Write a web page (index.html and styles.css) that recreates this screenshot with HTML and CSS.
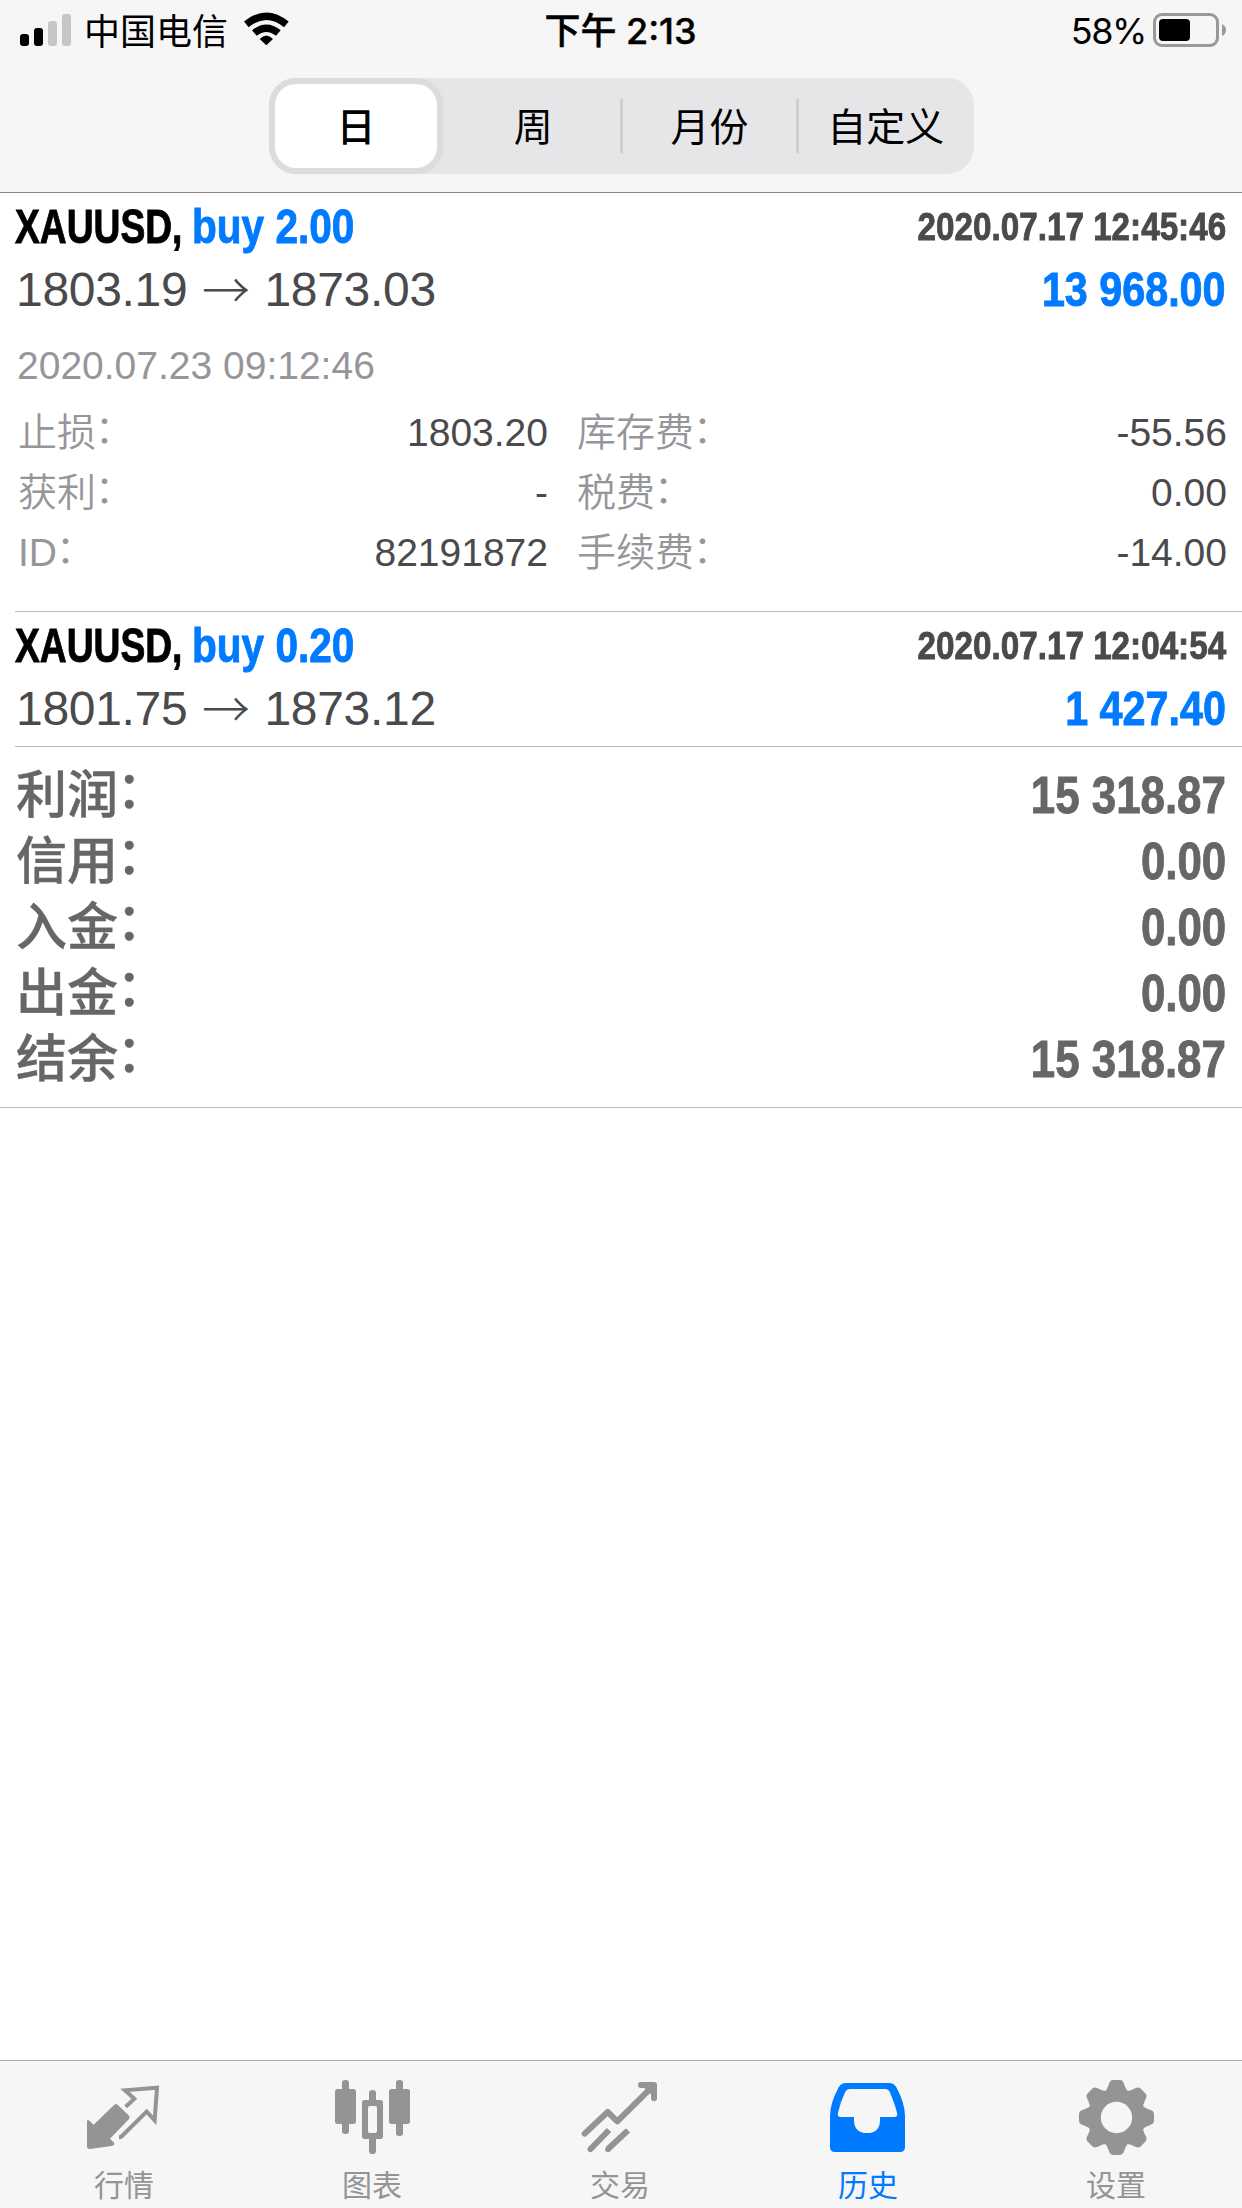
FILE: index.html
```html
<!DOCTYPE html>
<html lang="zh-CN">
<head>
<meta charset="utf-8">
<title>历史</title>
<link rel="stylesheet" href="styles.css">
</head>
<body>
<div class="app">
  <header class="top">
    <div class="status">
      <div class="status-side">
        <svg class="signal" viewBox="0 0 54 36" width="54" height="36">
          <rect x="0" y="22" width="9" height="12" rx="3"/>
          <rect x="14" y="16" width="9" height="18" rx="3"/>
          <rect class="off" x="28" y="9" width="9" height="25" rx="3"/>
          <rect class="off" x="42" y="2" width="9" height="32" rx="3"/>
        </svg>
        <span class="carrier">中国电信</span>
        <svg class="wifi" viewBox="728 34 140 108" width="46.7" height="36">
          <path d="M738 74 Q798 25 858 74" fill="none" stroke="#000" stroke-width="22"/>
          <path d="M762 100 Q798 71 834 100" fill="none" stroke="#000" stroke-width="22"/>
          <path d="M778 118 Q798 97 818 118 L798 137 Z"/>
        </svg>
      </div>
      <div class="clock">下午 2:13</div>
      <div class="status-side end">
        <span class="percent">58%</span>
        <svg class="battery" viewBox="0 0 74 36" width="74" height="36">
          <rect x="1.5" y="1.5" width="63" height="31" rx="7.5" fill="none" stroke="#999" stroke-width="3"/>
          <rect x="6" y="6" width="31" height="22" rx="4"/>
          <path d="M69 11 Q73 13 73 17 Q73 21 69 23 Z" fill="#999"/>
        </svg>
      </div>
    </div>
    <nav class="segments">
      <span class="segment active">日</span>
      <span class="segment">周</span>
      <span class="segment ruled">月份</span>
      <span class="segment ruled">自定义</span>
    </nav>
  </header>

  <main class="history">
    <article class="deal">
      <div class="line">
        <div class="title"><span class="symbol"><b>XAUUSD,</b></span><span class="side"><b>buy 2.00</b></span></div>
        <b class="closed">2020.07.17 12:45:46</b>
      </div>
      <div class="line prices">
        <div class="route">1803.19<span class="arrow">→</span>1873.03</div>
        <b class="profit">13 968.00</b>
      </div>
      <div class="details">
        <div class="opened">2020.07.23 09:12:46</div>
        <dl class="grid">
          <div class="pair"><dt>止损<i>：</i></dt><dd>1803.20</dd></div>
          <div class="pair"><dt>库存费<i>：</i></dt><dd>-55.56</dd></div>
          <div class="pair"><dt>获利<i>：</i></dt><dd>-</dd></div>
          <div class="pair"><dt>税费<i>：</i></dt><dd>0.00</dd></div>
          <div class="pair"><dt>ID<i>：</i></dt><dd>82191872</dd></div>
          <div class="pair"><dt>手续费<i>：</i></dt><dd>-14.00</dd></div>
        </dl>
      </div>
    </article>
    <article class="deal">
      <div class="line">
        <div class="title"><span class="symbol"><b>XAUUSD,</b></span><span class="side"><b>buy 0.20</b></span></div>
        <b class="closed">2020.07.17 12:04:54</b>
      </div>
      <div class="line prices">
        <div class="route">1801.75<span class="arrow">→</span>1873.12</div>
        <b class="profit">1 427.40</b>
      </div>
    </article>
    <section class="summary">
      <div class="total"><span>利润<i>：</i></span><b>15 318.87</b></div>
      <div class="total"><span>信用<i>：</i></span><b>0.00</b></div>
      <div class="total"><span>入金<i>：</i></span><b>0.00</b></div>
      <div class="total"><span>出金<i>：</i></span><b>0.00</b></div>
      <div class="total"><span>结余<i>：</i></span><b>15 318.87</b></div>
    </section>
  </main>

  <nav class="tabs">
    <a class="tab">
      <svg viewBox="246 75 252 237" width="84" height="79">
        <path d="M261 212 Q264 208 268 212 L281 224 L343 164 Q348 160 353 164 L387 197 Q391 202 387 207 L330 266 L343 279 Q344 284 339 287 L270 297 Q261 297 261 289 Z"/>
        <path d="M377 170 L403 146 L375 121 L471 113 L464 211 L440 185 L366 258 Q362 262 357 262" fill="none" stroke="currentColor" stroke-width="12"/>
      </svg>
      <span>行情</span>
    </a>
    <a class="tab">
      <svg viewBox="990 75 252 237" width="84" height="79">
        <rect x="1026" y="90" width="21" height="162" rx="9"/>
        <rect x="1005" y="117" width="63" height="105" rx="8"/>
        <rect x="1188" y="90" width="21" height="168" rx="9"/>
        <rect x="1167" y="117" width="63" height="105" rx="8"/>
        <path d="M1107 150 V129 Q1107 120 1117.500 120 Q1128 120 1128 129 V150 H1141 Q1149 150 1149 158 V259 Q1149 267 1141 267 H1128 V302 Q1128 312 1117.500 312 Q1107 312 1107 302 V267 H1094 Q1086 267 1086 259 V158 Q1086 150 1094 150 Z M1109 168 Q1104 168 1104 173 V244 Q1104 249 1109 249 H1126 Q1131 249 1131 244 V173 Q1131 168 1126 168 Z" fill-rule="evenodd"/>
      </svg>
      <span>图表</span>
    </a>
    <a class="tab">
      <svg viewBox="474 75 252 237" width="84" height="79">
        <g fill="none" stroke="currentColor" stroke-width="18" stroke-linejoin="round">
          <path d="M494 251 L563 186 L592 214 L700 107" stroke-linecap="round"/>
          <path d="M663 105 H702 V145" stroke-width="18" stroke-linecap="round"/>
          <path d="M512 297 L567 240 M564 297 L624 241"/>
        </g>
        <path d="M680 100 H706 V126 L690 132 L674 116 Z"/>
        <circle cx="511" cy="298" r="8.500"/><circle cx="564" cy="298" r="8.500"/>
      </svg>
      <span>交易</span>
    </a>
    <a class="tab current">
      <svg viewBox="78 75 252 237" width="84" height="79">
        <path d="M138 99 H267 Q282 99 289 112 Q315 160 315 198 V291 Q315 306 300 306 H105 Q90 306 90 291 V198 Q90 160 116 112 Q123 99 138 99 Z M149 117 Q140 117 136 125 Q122 153 114 188 Q111 201 122 201 H162 V209 Q162 249 201.500 249 Q240 249 240 209 V201 H283 Q294 201 291 188 Q284 160 269 125 Q265 117 257 117 Z" fill-rule="evenodd"/>
      </svg>
      <span>历史</span>
    </a>
    <a class="tab">
      <svg viewBox="822 75 252 237" width="84" height="79">
        <defs>
          <mask id="hub" maskUnits="userSpaceOnUse" x="822" y="75" width="252" height="252">
            <rect x="822" y="75" width="252" height="252" fill="#fff"/>
            <circle cx="949.500" cy="202.500" r="47" fill="#000"/>
          </mask>
          <path id="tooth" d="M910 128 Q921 121 925 107 Q929 90 939 90 H960 Q970 90 974 107 Q978 121 989 128 L949 202 Z"/>
        </defs>
        <g mask="url(#hub)">
          <circle cx="949.500" cy="202.500" r="86"/>
          <use href="#tooth"/>
          <use href="#tooth" transform="rotate(45 949.500 202.500)"/>
          <use href="#tooth" transform="rotate(90 949.500 202.500)"/>
          <use href="#tooth" transform="rotate(135 949.500 202.500)"/>
          <use href="#tooth" transform="rotate(180 949.500 202.500)"/>
          <use href="#tooth" transform="rotate(225 949.500 202.500)"/>
          <use href="#tooth" transform="rotate(270 949.500 202.500)"/>
          <use href="#tooth" transform="rotate(315 949.500 202.500)"/>
        </g>
      </svg>
      <span>设置</span>
    </a>
  </nav>
</div>
</body>
</html>
```
FILE: styles.css
```css
* { box-sizing: border-box; }

body {
  margin: 0;
  background: #fff;
  color: #000;
  font-family: "Liberation Sans", "Noto Sans CJK SC", sans-serif;
}

.app {
  display: flex;
  flex-direction: column;
  width: 1242px;
  height: 2208px;
  overflow: hidden;
}

/* status bar and period switch */
.top {
  height: 193px;
  background: #f6f6f6;
  border-bottom: 1px solid #8a8a8a;
}

.status {
  display: grid;
  grid-template-columns: 1fr auto 1fr;
  height: 60px;
  padding: 0 15px 0 20px;
  font: 400 36px/62px "Inter", "Noto Sans CJK SC", sans-serif;
}

.status-side { display: flex; }
.status-side.end { justify-content: flex-end; }
.signal { margin-top: 12px; }
.signal .off { fill: #c6c6c6; }
.carrier { width: 144px; margin-left: 10px; line-height: 64px; }
.wifi { margin: 11px 0 0 15px; }
.clock { margin-right: 6px; font-weight: 500; -webkit-text-stroke: 0.4px #000; }
.battery { margin: 13px 0 0 7px; }
.percent { letter-spacing: -1.4px; }

.segments {
  display: grid;
  grid-template-columns: repeat(4, 1fr);
  grid-template-rows: 96px;
  width: 705px;
  height: 96px;
  margin: 18px 0 0 269px;
  border-radius: 27px;
  background: #e6e6e8;
}

.segment {
  font-size: 39px;
  line-height: 100px;
  text-align: center;
}

.segment.active {
  margin: 6px 8px 6px 6px;
  border-radius: 21px;
  background: #fff;
  box-shadow: 0 0 0 6px #dcdcdd, 2px 0 10px rgba(0, 0, 0, 0.08);
  font-weight: 500;
  line-height: 88px;
}

.segment.ruled {
  margin-left: -2px;
  padding-left: 2px;
  background: linear-gradient(#cfcfd2, #cfcfd2) left 21px / 3px 54px no-repeat;
}

/* deals */
.history { flex: 1; }

/* full-width colons sit a little above their default height */
.history i {
  margin-left: -0.03em;
  font-style: normal;
  line-height: 0;
  vertical-align: 0.09em;
}

.deal {
  margin-left: 15px;
  padding: 4px 16px 4px 0;
  border-bottom: 1px solid #bdbdbf;
}

.line {
  display: flex;
  justify-content: space-between;
  height: 60px;
  line-height: 60px;
  white-space: nowrap;
}

.line b, .total b { -webkit-text-stroke: 0.9px currentColor; }

.title { display: flex; font-size: 48px; }
.title b { display: inline-block; transform-origin: left; }
.symbol { width: 177px; }
.symbol b { transform: scaleX(0.775); }
.side { color: #007aff; }
.side b { transform: scaleX(0.845); }

.closed {
  color: #4a4a4d;
  font-size: 39px;
  line-height: 59px;
  transform: scaleX(0.852);
  transform-origin: right;
}

.prices { height: 66px; line-height: 66px; font-size: 48px; }
.route { display: flex; padding-left: 1px; color: #4a4a4d; letter-spacing: -0.3px; }
.arrow {
  width: 77px;
  font-family: "Noto Sans CJK SC", sans-serif;
  font-weight: 300;
  line-height: 60px;
  text-align: center;
}

.profit {
  color: #007aff;
  transform: scaleX(0.86);
  transform-origin: right;
}

.details { padding: 7px 0 24px 2px; font-size: 39px; }
.opened { line-height: 71px; color: #96969a; }

.grid {
  display: grid;
  grid-template-columns: 531px 651px;
  column-gap: 28px;
  margin: 2px 0 0;
  line-height: 60px;
}

.pair { display: flex; justify-content: space-between; height: 60px; }
.pair dt { padding-left: 1px; color: #96969a; font-weight: 350; }
.pair dd { margin: 0; color: #4a4a4d; }

/* totals */
.summary {
  padding: 16px 16px 14px;
  border-bottom: 1px solid #bdbdbf;
  color: #666;
  font-size: 51px;
  line-height: 66px;
}

.total { display: flex; justify-content: space-between; height: 66px; }
.total span { font-weight: 500; -webkit-text-stroke: 0.4px currentColor; }
.total b { transform: scaleX(0.86); transform-origin: right; }

/* bottom tabs */
.tabs {
  display: flex;
  height: 148px;
  padding-top: 14px;
  background: #f6f6f6;
  border-top: 1px solid #adadad;
}

.tab {
  display: flex;
  flex-direction: column;
  align-items: center;
  width: 248px;
  color: #949494;
  font-size: 30px;
  line-height: 40px;
}

.tab.current { color: #007aff; }
.tab svg { fill: currentColor; overflow: visible; }
.tab span { margin-top: 12px; }
```
